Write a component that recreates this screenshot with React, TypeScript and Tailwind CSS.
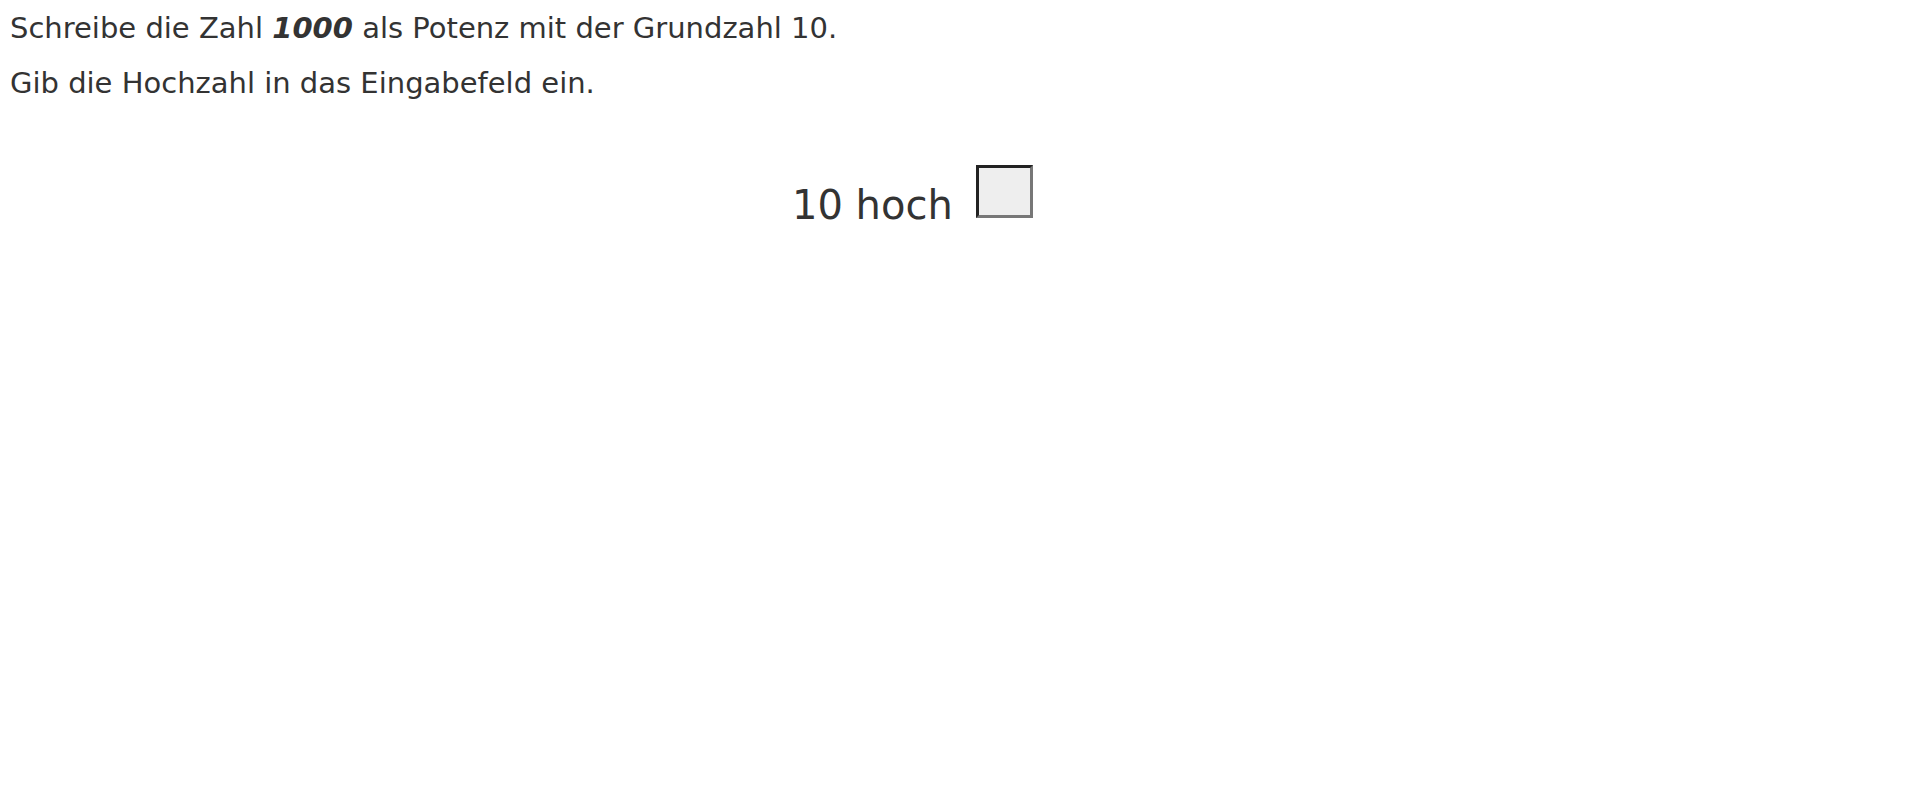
export default function App() {
  return (
    <div className="min-h-screen bg-white text-[#333]" style={{ fontFamily: '"DejaVu Sans", Verdana, sans-serif' }}>
      <div className="px-[10px] pt-[8px]">
        <p className="text-[29px] leading-[40px]">
          Schreibe die Zahl <b><i>1000</i></b> als Potenz mit der Grundzahl 10.
        </p>
        <p className="text-[29px] leading-[40px] mt-[15px]">Gib die Hochzahl in das Eingabefeld ein.</p>
      </div>
      <div className="flex items-end pl-[792px] mt-[62px]">
        <span className="text-[40px] leading-[48px]">10 hoch</span>
        <div className="ml-[23px] mb-[11px] w-[57px] h-[53px] bg-[#eee] border-[3px] border-t-[#222] border-l-[#222] border-b-[#777] border-r-[#777]" />
      </div>
    </div>
  );
}
